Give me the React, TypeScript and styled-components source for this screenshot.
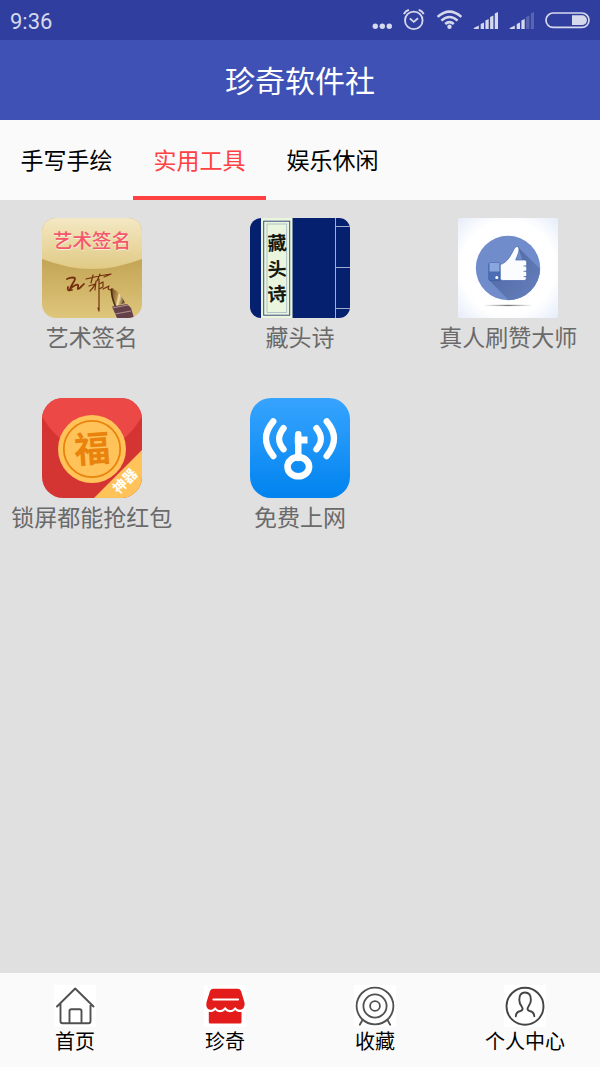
import React, { useState } from 'react';
import styled, { createGlobalStyle } from 'styled-components';

const GlobalStyle = createGlobalStyle`
  * { box-sizing: border-box; }
  body {
    margin: 0;
    background: #e0e0e0;
    font-family: 'Noto Sans CJK SC', sans-serif;
  }
  svg { display: block; flex: none; }
`;

const Screen = styled.div`
  display: flex;
  flex-direction: column;
  min-height: 100vh;
  background: #e0e0e0;
`;

const StatusBar = styled.div`
  display: flex;
  align-items: center;
  justify-content: space-between;
  height: 40px;
  padding: 0 10px;
  background: #303f9f;
  color: #d6d9ec;
`;

const Clock = styled.time`
  padding-top: 4px;
  font-family: Roboto, sans-serif;
  font-size: 22px;
  line-height: 26px;
`;

const StatusIcons = styled.div`
  display: flex;
  align-items: center;
  gap: 11px;
`;

const Header = styled.header`
  display: flex;
  align-items: center;
  justify-content: center;
  height: 80px;
  padding-bottom: 2px;
  background: #3f51b5;
`;

const Title = styled.h1`
  margin: 0;
  color: #fff;
  font-size: 30px;
  font-weight: 400;
  line-height: 40px;
`;

const TabBar = styled.div`
  display: flex;
  height: 80px;
  background: #fafafa;
`;

const Tab = styled.button<{ $active: boolean }>`
  min-width: 133px;
  padding: 2px 20px 0;
  border: 0;
  border-bottom: 4px solid ${(p) => (p.$active ? '#ff4141' : 'transparent')};
  background: none;
  color: ${(p) => (p.$active ? '#ff4141' : '#000')};
  font-family: inherit;
  font-size: 23px;
  line-height: 32px;
  white-space: nowrap;
  cursor: pointer;
`;

const AppGrid = styled.main`
  flex: 1;
  display: grid;
  grid-template-columns: repeat(3, 1fr);
  align-content: start;
  column-gap: 45px;
  row-gap: 46px;
  padding: 18px 10px;
`;

const AppButton = styled.button`
  display: flex;
  flex-direction: column;
  align-items: center;
  gap: 2px;
  min-width: 0;
  padding: 0;
  border: 0;
  background: none;
  color: #6a6a6a;
  font-family: inherit;
  font-size: 23px;
  line-height: 32px;
  white-space: nowrap;
  cursor: pointer;
`;

const BottomNav = styled.nav`
  display: grid;
  grid-template-columns: repeat(4, 1fr);
  padding: 12px 0;
  background: #fafafa;
`;

const NavLink = styled.a`
  display: flex;
  flex-direction: column;
  align-items: center;
  color: #000;
  font-size: 20px;
  line-height: 28px;
  text-decoration: none;
`;

const NavIcon = styled.svg`
  width: 42px;
  height: 42px;
  background: #fff;
`;

const iconFont = "'Noto Sans CJK SC', sans-serif";

const MoreDots = () => (
  <svg width="20" height="40" fill="currentColor" aria-hidden="true">
    <circle cx="3.3" cy="26.2" r="2.7" />
    <circle cx="10.3" cy="26.2" r="2.7" />
    <circle cx="17.3" cy="26.2" r="2.7" />
  </svg>
);

const AlarmIcon = () => (
  <svg width="22" height="40" fill="none" stroke="currentColor" strokeWidth="1.8" aria-hidden="true">
    <circle cx="10.8" cy="20.4" r="8.8" />
    <path d="M6.8 18.3l4 3.6 4.2-3.6M.9 14.2c.9-2.2 2.7-3.7 5-4.4M20.7 14.2c-.9-2.2-2.7-3.7-5-4.4" />
  </svg>
);

const WifiIcon = () => (
  <svg width="26" height="40" fill="none" stroke="currentColor" strokeWidth="2.6" aria-hidden="true">
    <path d="M1.6 16.9Q13.5 6.2 25.4 16.9M5.4 20.6Q13.5 13.4 21.6 20.6M9.2 24Q13.5 20.2 17.8 24" />
    <circle cx="13.5" cy="26.8" r="2.2" fill="currentColor" stroke="none" />
  </svg>
);

const SignalIcon = ({ strength }: { strength: number }) => (
  <svg width="25" height="40" fill="currentColor" aria-hidden="true">
    <path d="M.8 29v-1l5-2.6V29z" />
    {[23, 19.4, 15.9, 12.4].map((top, i) => (
      <path
        key={top}
        d={`M${7.7 + i * 4.7} 29V${top + 1}l3.3-1.4V29z`}
        opacity={i + 1 < strength ? 1 : 0.25}
      />
    ))}
  </svg>
);

const BatteryIcon = () => (
  <svg width="45" height="40" aria-hidden="true">
    <rect x="1" y="13" width="43" height="14.4" rx="7.2" fill="none" stroke="currentColor" strokeWidth="1.7" />
    <path d="M27 15.3h10a4.9 4.9 0 0 1 0 9.8H27z" fill="currentColor" />
  </svg>
);

const SignatureIcon = () => (
  <svg width="100" height="100" viewBox="0 0 100 100" aria-hidden="true">
    <defs>
      <linearGradient id="sigBase" x2="0" y2="1">
        <stop offset=".4" stopColor="#c3a454" />
        <stop offset="1" stopColor="#dec67c" />
      </linearGradient>
      <linearGradient id="sigShine" x2="0" y2="1">
        <stop stopColor="#f4e8c4" />
        <stop offset="1" stopColor="#e0ca84" />
      </linearGradient>
      <linearGradient id="nib" y2=".3">
        <stop offset=".1" stopColor="#7d5a28" />
        <stop offset=".5" stopColor="#b98f48" />
        <stop offset=".65" stopColor="#f4e2ae" />
        <stop offset="1" stopColor="#715024" />
      </linearGradient>
      <clipPath id="sigClip"><rect width="100" height="100" rx="14" /></clipPath>
    </defs>
    <g clipPath="url(#sigClip)">
      <rect width="100" height="100" fill="url(#sigBase)" />
      <path d="M0 0h100v41Q74 51 50 51T0 41z" fill="url(#sigShine)" />
      <text x="50.5" y="30.5" textAnchor="middle" fontFamily={iconFont} fontSize="19.5" fontWeight="500" fill="#fff" opacity=".6">艺术签名</text>
      <text x="50" y="30" textAnchor="middle" fontFamily={iconFont} fontSize="19.5" fontWeight="500" fill="#f5576a">艺术签名</text>
      <g fill="none" stroke="#74300f" strokeWidth="1.2" strokeLinecap="round" strokeLinejoin="round">
        <path d="M25 61c4-2 8-2 8 0s-4 6-5 10c3-3 7-5 8-4s-1 3 0 4c2 0 4-4 6-5M26 69c-1 3 0 4 4 3" strokeWidth="1.8" />
        <path d="M44 61c8-2 16-4 25-5l-7 3M51 57l-2 8M58 56l-3 7M47 68l6-2c-1 3-3 5-5 7M54 63l-1 9M57 66l4-2v5l-4 2M57 61v32l-1-3M61 71l6-3c-2 3 0 5 4 3" />
      </g>
      <path d="M69.5 70.5c5 1 11 8 13.500 14.500l-9.500 3.500c-3-7-4.500-12-4-18z" fill="url(#nib)" />
      <path d="M69.500 70.500c-.5 6 1 11 4 18" fill="none" stroke="#4a3018" strokeWidth="1.6" />
      <path d="M70 88.500l15-2.500 4 4 3 10H75z" fill="#64404a" />
      <path d="M70 90l16-3M73 96l16-3" stroke="#ae8f8b" strokeWidth="1.2" />
    </g>
  </svg>
);

const PoemIcon = () => (
  <svg width="100" height="100" viewBox="0 0 100 100" aria-hidden="true">
    <defs><clipPath id="poemClip"><rect width="100" height="100" rx="11" /></clipPath></defs>
    <g clipPath="url(#poemClip)">
      <rect width="100" height="100" fill="#04206f" />
      <rect x="11" width="31.5" height="100" fill="#e9f5dc" />
      <rect x="13.7" y="3.2" width="26" height="94" fill="none" stroke="#3e4a80" />
      <rect x="17" y="6" width="19.7" height="88.5" fill="none" stroke="#a3b7c4" strokeWidth=".8" />
      <g fontFamily={iconFont} fontSize="19" fontWeight="700" fill="#141811" textAnchor="middle">
        <text transform="rotate(-4 27 25)" x="27" y="32">藏</text>
        <text transform="rotate(-4 27 50)" x="27" y="58">头</text>
        <text transform="rotate(-4 27 76)" x="27" y="83">诗</text>
      </g>
      <path d="M85.5 0v100M86 8.5h14M86 49.5h14M86 90.5h14" stroke="#b4bdd8" strokeWidth=".9" />
    </g>
  </svg>
);

const LikeIcon = () => (
  <svg width="100" height="100" viewBox="0 0 100 100" aria-hidden="true">
    <defs>
      <radialGradient id="likeBg" r=".72">
        <stop offset=".65" stopColor="#fff" />
        <stop offset="1" stopColor="#e4ebf9" />
      </radialGradient>
      <linearGradient id="likeShadow" x2="1" y2="1">
        <stop stopColor="#4d659f" />
        <stop offset="1" stopColor="#6e89c8" />
      </linearGradient>
      <linearGradient id="likeFloor">
        <stop stopColor="#888" stopOpacity="0" />
        <stop offset=".5" stopColor="#777" />
        <stop offset="1" stopColor="#888" stopOpacity="0" />
      </linearGradient>
      <clipPath id="likeClip"><circle cx="50" cy="50" r="32.2" /></clipPath>
    </defs>
    <rect width="100" height="100" fill="url(#likeBg)" />
    <rect x="25" y="86.8" width="50" height="1.3" fill="url(#likeFloor)" />
    <circle cx="50" cy="50" r="32.2" fill="#718ccb" />
    <path clipPath="url(#likeClip)" d="M60 29l35 35v36H68L31 62l34-18z" fill="url(#likeShadow)" />
    <path d="M31.5 45h10.300v17.500h-9.500a1.500 1.500 0 0 1-1.500-1.500V46z" fill="#4a6db3" stroke="#3c5da5" strokeWidth=".8" />
    <path d="M31.500 45h10v8.500h-10z" fill="#8aa6dc" />
    <circle cx="38.800" cy="59.500" r="1.500" fill="#fff" />
    <path d="M42.300 46.500c5.500-1.500 8.700-6 11.700-11.500 1.500-2.700 2.500-6.200 5-6.600 2.200 0 2.200 3.300 1.700 5.600-.7 3-2.200 5.500-3 8h9q2 0 2 2v3.200l-1 .8 1 .9v3.600l-1 .8 1 .9v3.600l-1 .8.6.8v1.200q0 1.900-2 1.900H45.500q-1.800 0-3.200-1z" fill="#fafcff" stroke="#4565a8" strokeWidth=".7" />
    <path d="M65.500 48h2.500M65.500 53.300h2.500M65.500 58.600h2.500" stroke="#4565a8" strokeWidth=".8" />
  </svg>
);

const RedPacketIcon = () => (
  <svg width="100" height="100" viewBox="0 0 100 100" aria-hidden="true">
    <defs><clipPath id="packetClip"><rect width="100" height="100" rx="21" /></clipPath></defs>
    <g clipPath="url(#packetClip)">
      <rect width="100" height="100" fill="#d53532" />
      <path d="M0 0h100v18C88 40 69 53 50 53S12 40 0 18z" fill="#ec4846" />
      <circle cx="50" cy="51" r="34" fill="#ffc35a" />
      <circle cx="50" cy="51" r="28.2" fill="none" stroke="#e9830d" strokeWidth="1.8" />
      <text transform="rotate(-4 50 51)" x="50" y="64" textAnchor="middle" fontFamily={iconFont} fontSize="36" fontWeight="700" fill="#e9830d">福</text>
      <path d="M52 100l48-48v48z" fill="#ffc35a" />
      <text transform="translate(83 83) rotate(-45)" y="5" textAnchor="middle" fontFamily={iconFont} fontSize="14" fontWeight="700" fill="#fff">神器</text>
    </g>
  </svg>
);

const WifiKeyIcon = () => (
  <svg width="100" height="100" viewBox="0 0 100 100" aria-hidden="true">
    <defs>
      <linearGradient id="keyBg" x2="0" y2="1">
        <stop stopColor="#37a4ff" />
        <stop offset="1" stopColor="#0083ef" />
      </linearGradient>
    </defs>
    <rect width="100" height="100" rx="21" fill="url(#keyBg)" />
    <g fill="none" stroke="#fff" strokeWidth="6.4" strokeLinecap="round">
      <path d="M23.3 23.4C13.5 35 13.5 46 23.3 58M33.5 30.2C27.5 38 27.5 44 33.5 51.2M76.7 23.4C86.5 35 86.5 46 76.7 58M66.5 30.2C72.5 38 72.5 44 66.5 51.2" />
      <path d="M48.3 36.2V60" />
      <path d="M48.3 42H54" strokeWidth="7" strokeLinecap="square" strokeLinejoin="round" />
      <ellipse cx="48.3" cy="68.7" rx="10.8" ry="9.6" strokeWidth="6.6" />
    </g>
  </svg>
);

const HomeIcon = () => (
  <NavIcon viewBox="0 0 42 42" fill="none" stroke="#505050" strokeWidth="1.9" strokeLinecap="round" strokeLinejoin="round" aria-hidden="true">
    <path d="M3 21.500L21.200 3.500l18.300 18M6.500 18.500v17.800q0 2 2 2h26q2 0 2-2V18.500M15.500 38V26q0-1.800 1.800-1.800h8.400q1.800 0 1.800 1.800v12" />
  </NavIcon>
);

const ShopIcon = () => (
  <NavIcon viewBox="0 0 42 42" aria-hidden="true">
    <path d="M9.5 3.8h24q2.5 0 3.5 2.2l3.200 10.500c1.300 4-.5 8.200-4.200 8.200-2.300 0-3.500-1.200-4.800-2.800-1.500 2-3 3.200-5 3.200-2.200 0-3.800-1.400-5-3.300-1.300 1.900-2.800 3.300-5 3.300s-3.800-1.300-5-3.200c-1.400 1.800-2.800 2.900-5 2.900-3.500 0-4.700-4.500-3.400-8.500L6 6q1-2.200 3.500-2.200z" fill="#e31b1b" />
    <path d="M4.8 26.8c2.4.6 4.8 0 6.4-1.8 2.8 3 7 3 9.900 0 2.900 3 7.200 3 10 0 1.800 1.800 3.800 2.400 6.400 1.800v10.300q0 1.500-1.500 1.500H6.300q-1.500 0-1.500-1.500z" fill="#e31b1b" />
    <path d="M9.500 14.500H34" stroke="#fff" strokeWidth="2.200" strokeLinecap="round" />
  </NavIcon>
);

const TargetIcon = () => (
  <NavIcon viewBox="0 0 42 42" fill="none" stroke="#505050" strokeWidth="1.8" strokeLinecap="round" aria-hidden="true">
    <circle cx="21" cy="21" r="18.4" />
    <circle cx="21" cy="21" r="11.6" />
    <circle cx="21" cy="21" r="4.9" />
    <path d="M8.500 35l-2.700 4.700M33.500 35l2.700 4.700" />
  </NavIcon>
);

const ProfileIcon = () => (
  <NavIcon viewBox="0 0 42 42" fill="none" stroke="#444" strokeWidth="1.9" strokeLinecap="round" strokeLinejoin="round" aria-hidden="true">
    <circle cx="21" cy="21.3" r="18.5" />
    <path d="M11.800 31.200c.2-3.600 2-4.600 4.700-5.200 2.400-.6 2.700-2.400 1-4.800-1.700-2.200-2.200-3.800-2.200-6.200-.1-4.900 1.800-7.500 5.700-7.500s6 2.600 5.900 7.500c0 2.400-.6 4-2.300 6.200-1.700 2.400-1.400 4.200 1 4.800 2.700.6 4.500 1.600 4.700 5.200" />
  </NavIcon>
);

const tabs = ['手写手绘', '实用工具', '娱乐休闲'];

const apps = [
  { name: '艺术签名', Icon: SignatureIcon },
  { name: '藏头诗', Icon: PoemIcon },
  { name: '真人刷赞大师', Icon: LikeIcon },
  { name: '锁屏都能抢红包', Icon: RedPacketIcon },
  { name: '免费上网', Icon: WifiKeyIcon },
];

const navItems = [
  { name: '首页', href: '#home', Icon: HomeIcon },
  { name: '珍奇', href: '#zhenqi', Icon: ShopIcon },
  { name: '收藏', href: '#favorites', Icon: TargetIcon },
  { name: '个人中心', href: '#profile', Icon: ProfileIcon },
];

export default function App() {
  const [active, setActive] = useState(1);
  return (
    <Screen>
      <GlobalStyle />
      <StatusBar>
        <Clock>9:36</Clock>
        <StatusIcons>
          <MoreDots />
          <AlarmIcon />
          <WifiIcon />
          <SignalIcon strength={5} />
          <SignalIcon strength={3} />
          <BatteryIcon />
        </StatusIcons>
      </StatusBar>
      <Header>
        <Title>珍奇软件社</Title>
      </Header>
      <TabBar role="tablist">
        {tabs.map((name, i) => (
          <Tab key={name} role="tab" aria-selected={i === active} $active={i === active} onClick={() => setActive(i)}>
            {name}
          </Tab>
        ))}
      </TabBar>
      <AppGrid>
        {apps.map(({ name, Icon }) => (
          <AppButton key={name}>
            <Icon />
            <span>{name}</span>
          </AppButton>
        ))}
      </AppGrid>
      <BottomNav>
        {navItems.map(({ name, href, Icon }) => (
          <NavLink key={name} href={href}>
            <Icon />
            <span>{name}</span>
          </NavLink>
        ))}
      </BottomNav>
    </Screen>
  );
}
